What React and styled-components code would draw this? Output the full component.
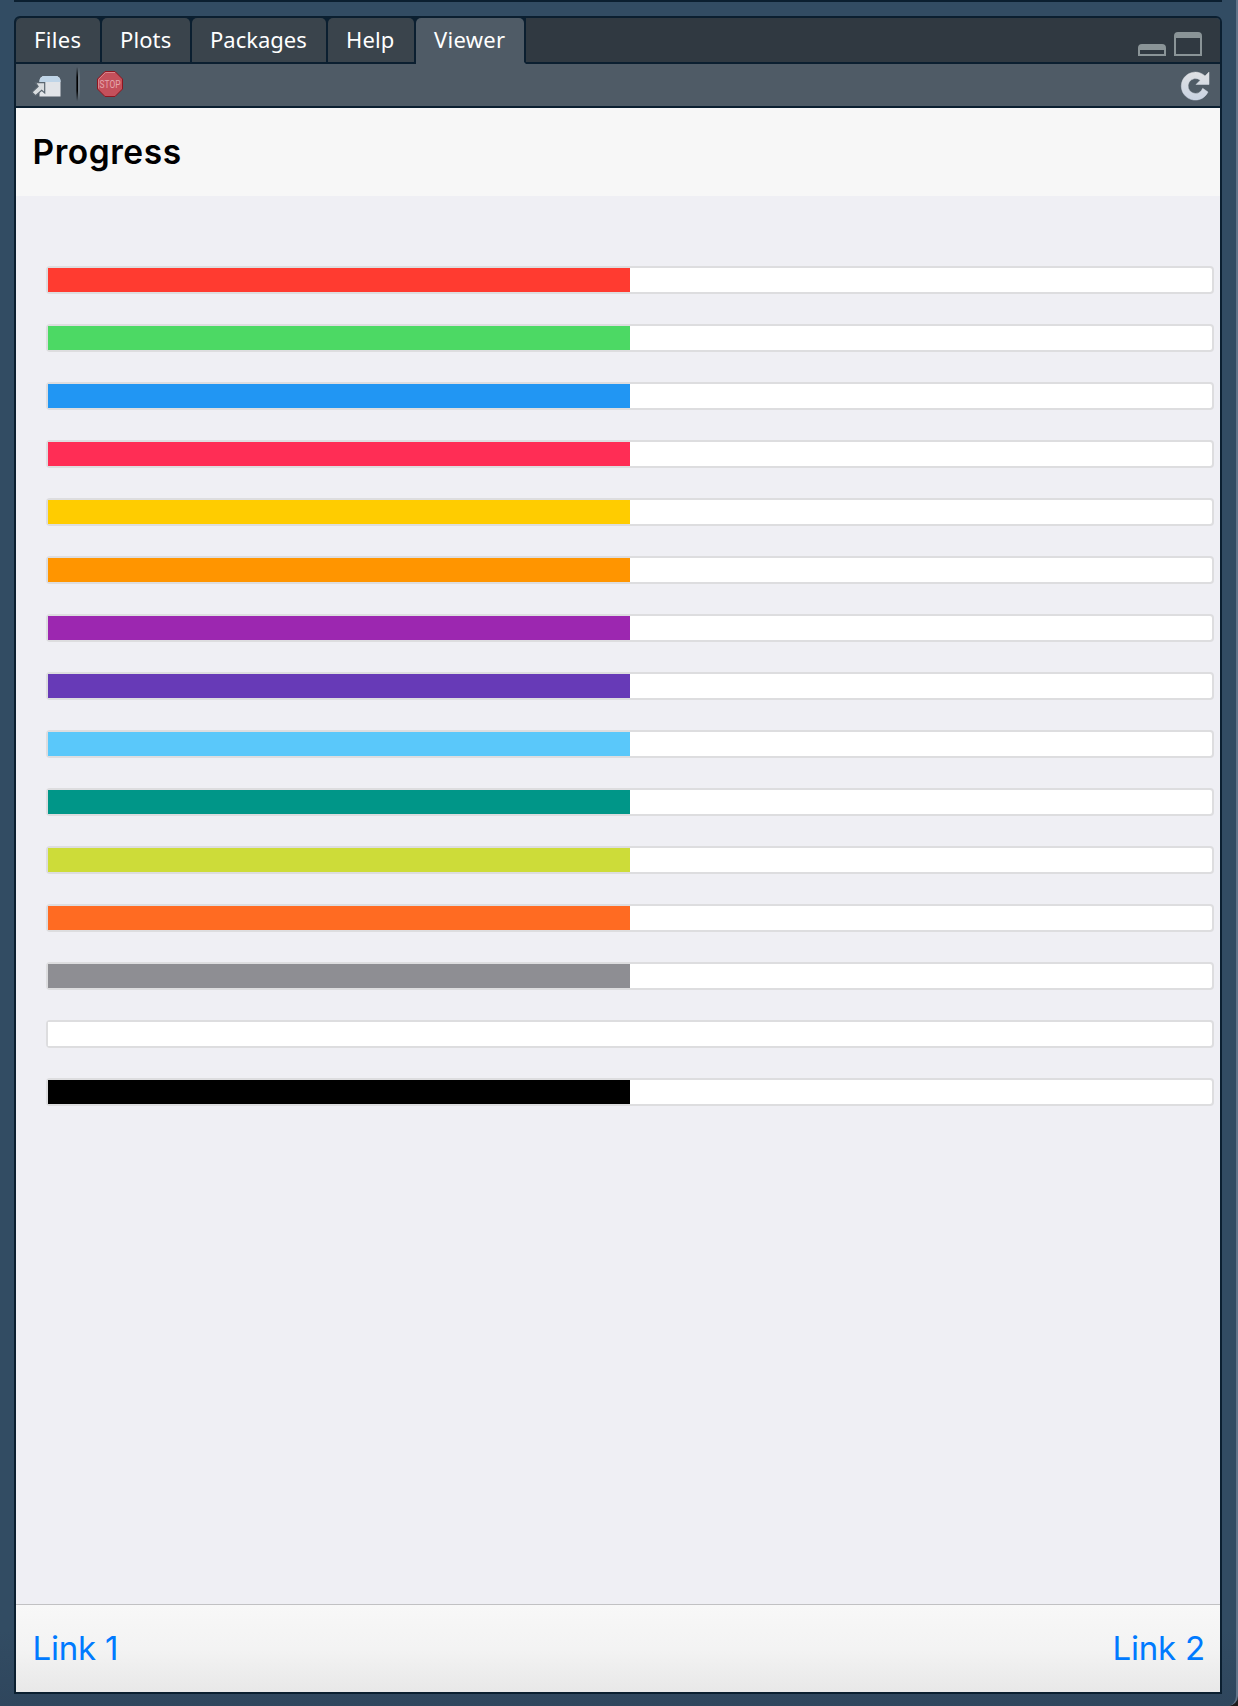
import React from "react";
import styled, { createGlobalStyle } from "styled-components";

const GlobalStyle = createGlobalStyle`
  *, *::before, *::after { box-sizing: border-box; }
  html, body { margin: 0; background: #1d1a1c; }
`;

const Desktop = styled.div`
  height: 1706px;
  padding: 0 14px 12px;
  display: flex;
  flex-direction: column;
  background: linear-gradient(180deg, #324c63 0, #324c63 1630px, #2f465d 1706px);
  border-right: 2px solid #61748a;
  border-bottom-right-radius: 10px;
  overflow: hidden;
`;

const UpperPaneEdge = styled.div`
  height: 2px;
  flex: none;
  margin-bottom: 14px;
  background: #0b1f30;
`;

const Pane = styled.section`
  flex: 1;
  display: flex;
  flex-direction: column;
  border: 2px solid #0b1f30;
  border-radius: 6px 6px 0 0;
  overflow: hidden;
`;

const TabStrip = styled.nav`
  display: flex;
  height: 46px;
  flex: none;
  background: #303941;
`;

const Tab = styled.div`
  width: ${(p) => p.$width}px;
  height: 46px;
  padding: 0 0 2px ${(p) => p.$indent}px;
  display: flex;
  align-items: center;
  background: #0b1f30;
  position: relative;
  z-index: 0;
  border-right: 2px solid #0b1f30;
  border-bottom: 2px solid ${(p) => (p.$active ? "#4f5b66" : "#0b1f30")};
  color: #fff;
  font: 400 22px/30px "Noto Sans", "Open Sans", sans-serif;
  letter-spacing: ${(p) => p.$tracking}px;
  white-space: nowrap;

  &::before {
    content: "";
    position: absolute;
    inset: 0;
    z-index: -1;
    border-radius: 5px 5px 0 0;
    background: ${(p) => (p.$active ? "#4f5b66" : "#3a444c")};
  }
`;

const WindowControls = styled.div`
  flex: 1;
  display: flex;
  justify-content: flex-end;
  align-items: flex-end;
  gap: 8px;
  padding: 0 18px 6px 0;
  border-bottom: 2px solid #0b1f30;
`;

const WindowButton = styled.span`
  width: 28px;
  height: ${(p) => p.$height}px;
  border: 2px solid #8a9497;
  border-top-width: 6px;
  border-radius: 4px 4px 0 0;
`;

const Toolbar = styled.div`
  height: 44px;
  flex: none;
  display: flex;
  align-items: flex-start;
  padding: 0 10px 0 14px;
  background: #4f5b66;
  border-bottom: 2px solid #0b1f30;

  svg { display: block; flex: none; overflow: visible; }
`;

const Separator = styled.span`
  width: 4px;
  height: 34px;
  margin: 3px 16px 0 14px;
  background: linear-gradient(90deg, #0009 0 1px, #000 1px 2px, #87909780 2px 4px);
  mask-image: linear-gradient(transparent, #000 30%, #000 70%, transparent);
`;

const Spacer = styled.span`
  flex: 1;
`;

const PageHeader = styled.header`
  height: 88px;
  flex: none;
  display: flex;
  align-items: center;
  padding: 0 16.5px;
  background: #f7f7f7;
`;

const Title = styled.h1`
  margin: 0;
  color: #000;
  font: 600 33.5px/44px Inter, sans-serif;
  letter-spacing: 0.55px;
`;

const Content = styled.main`
  flex: 1;
  display: flex;
  flex-direction: column;
  gap: 30px;
  padding: 70px 6px 0 30px;
  background: #efeff4;
`;

const Track = styled.div`
  height: 28px;
  flex: none;
  border: 2px solid #dddddf;
  border-radius: 4px;
  background: #fff;
`;

const Fill = styled.div`
  width: 50%;
  height: 100%;
  background: ${(p) => p.$color};
`;

const Footer = styled.footer`
  height: 88px;
  flex: none;
  display: flex;
  justify-content: space-between;
  align-items: center;
  padding: 0 15px 2px 16.5px;
  border-top: 1px solid #c1c1c3;
  background: linear-gradient(#f8f8f8, #f3f3f3 50%, #e8e8e8);
`;

const FooterLink = styled.a`
  color: #007aff;
  font: 400 33px/44px Inter, sans-serif;
  letter-spacing: -0.2px;
`;

const tabs = [
  { label: "Files", width: 86, indent: 18, tracking: 0.3 },
  { label: "Plots", width: 90, indent: 18, tracking: 0.1 },
  { label: "Packages", width: 136, indent: 18, tracking: 0 },
  { label: "Help", width: 88, indent: 18, tracking: 0.1 },
  { label: "Viewer", width: 110, indent: 18, tracking: 0.3, active: true },
];

const colors = [
  "#ff3b30", "#4cd964", "#2196f3", "#ff2d55", "#ffcc00",
  "#ff9500", "#9c27b0", "#673ab7", "#5ac8fa", "#009688",
  "#cddc39", "#ff6b22", "#8e8e93", "#ffffff", "#000000",
];

const OpenWindowIcon = () => (
  <svg width="32" height="42" viewBox="0 0 32 42">
    <path d="M9.500 32.500V17a5 5 0 0 1 5-5h11a5 5 0 0 1 5 5v15.500z" fill="#e1e4e8" />
    <path d="M9.500 18v-1a5 5 0 0 1 5-5h11a5 5 0 0 1 5 5v1z" fill="#bfd5e8" />
    <path d="M5.500 18.700h9.200v10.300l-3-2.600-6.200 5.300-3.600-3.500 6.200-5.700z" fill="#d9dde0" stroke="#59656f" strokeWidth="1.200" />
  </svg>
);

const StopIcon = () => (
  <svg width="28" height="42" viewBox="0 0 28 42">
    <path d="M9 7.500h10l7.500 7.500v10l-7.500 7.500h-10l-7.500-7.500v-10z" fill="#c4505b" stroke="#8e1620" />
    <path d="M2.500 24.500V15.500l7-7h9.500" fill="none" stroke="#d8858b" />
    <text x="14" y="24" textAnchor="middle" textLength="21" lengthAdjust="spacingAndGlyphs" fill="#e4a6ac" fontFamily="Roboto, sans-serif" fontSize="11">STOP</text>
  </svg>
);

const RefreshIcon = () => (
  <svg width="30" height="42" viewBox="0 0 30 42">
    <defs>
      <linearGradient id="refresh" x1="0" y1="0" x2="0" y2="1">
        <stop offset="0" stopColor="#dfe1e4" />
        <stop offset="1" stopColor="#c9d3e2" />
      </linearGradient>
    </defs>
    <path d="M29 8V20.500H16l4.300-4.300A7.500 7.500 0 1 0 22.700 24.300L28 28A14 14 0 1 1 25 12z" fill="url(#refresh)" stroke="url(#refresh)" strokeWidth="0.500" strokeLinejoin="round" />
  </svg>
);

export default function App() {
  return (
    <>
      <GlobalStyle />
      <Desktop>
        <UpperPaneEdge />
        <Pane>
          <TabStrip>
            {tabs.map((t) => (
              <Tab key={t.label} $width={t.width} $indent={t.indent} $tracking={t.tracking} $active={t.active}>
                {t.label}
              </Tab>
            ))}
            <WindowControls>
              <WindowButton $height={12} />
              <WindowButton $height={24} />
            </WindowControls>
          </TabStrip>
          <Toolbar>
            <OpenWindowIcon />
            <Separator />
            <StopIcon />
            <Spacer />
            <RefreshIcon />
          </Toolbar>
          <PageHeader>
            <Title>Progress</Title>
          </PageHeader>
          <Content>
            {colors.map((color) => (
              <Track key={color}>
                <Fill $color={color} />
              </Track>
            ))}
          </Content>
          <Footer>
            <FooterLink>Link 1</FooterLink>
            <FooterLink>Link 2</FooterLink>
          </Footer>
        </Pane>
      </Desktop>
    </>
  );
}
